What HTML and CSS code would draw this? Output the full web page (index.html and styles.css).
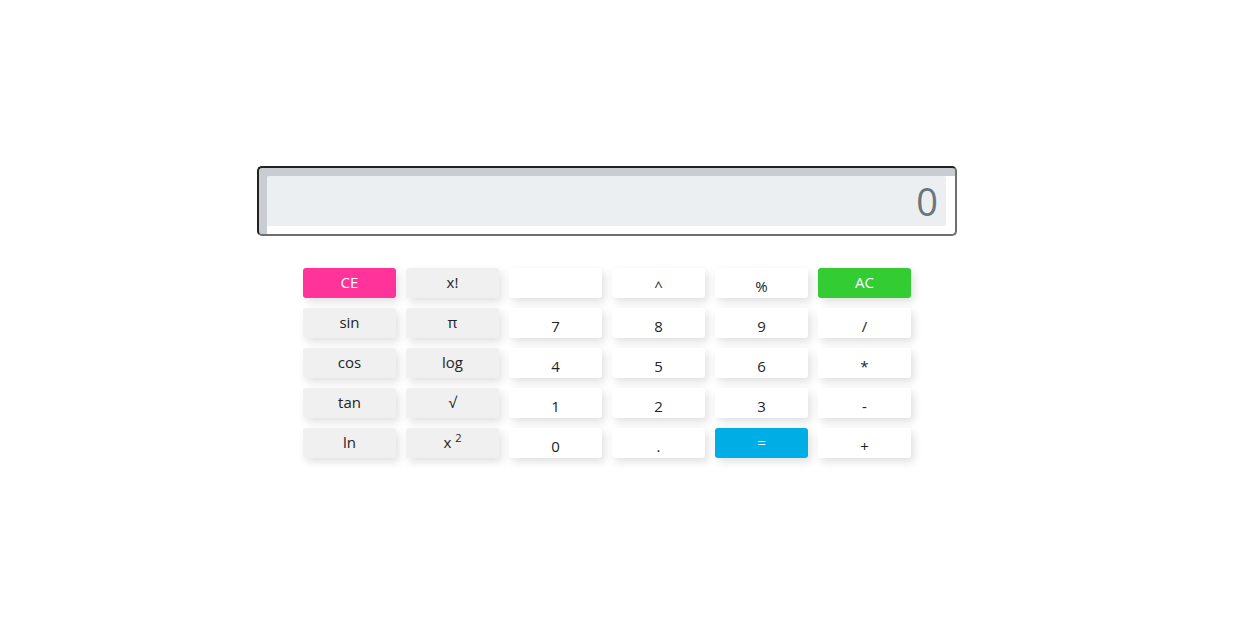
FILE: index.html
```html
<!DOCTYPE html>
<html lang="en">
<head>
<meta charset="utf-8">
<title>Calculator</title>
<link rel="stylesheet" href="styles.css">
</head>
<body>
<main class="calc">
  <div class="display">
    <div class="screen">0</div>
  </div>
  <div class="keys">
    <button class="key key-ce">CE</button>
    <button class="key key-fn">x!</button>
    <button class="key key-num"></button>
    <button class="key key-num">^</button>
    <button class="key key-num">%</button>
    <button class="key key-ac">AC</button>

    <button class="key key-fn">sin</button>
    <button class="key key-fn">π</button>
    <button class="key key-num">7</button>
    <button class="key key-num">8</button>
    <button class="key key-num">9</button>
    <button class="key key-num">/</button>

    <button class="key key-fn">cos</button>
    <button class="key key-fn">log</button>
    <button class="key key-num">4</button>
    <button class="key key-num">5</button>
    <button class="key key-num">6</button>
    <button class="key key-num">*</button>

    <button class="key key-fn">tan</button>
    <button class="key key-fn">√</button>
    <button class="key key-num">1</button>
    <button class="key key-num">2</button>
    <button class="key key-num">3</button>
    <button class="key key-num">-</button>

    <button class="key key-fn">ln</button>
    <button class="key key-fn">x <sup>2</sup></button>
    <button class="key key-num">0</button>
    <button class="key key-num">.</button>
    <button class="key key-eq">=</button>
    <button class="key key-num">+</button>
  </div>
</main>
</body>
</html>
```
FILE: styles.css
```css
html, body {
  margin: 0;
  padding: 0;
  background: #ffffff;
}

body {
  font-family: "Open Sans", "Noto Sans", sans-serif;
  color: #212529;
}

.calc {
  width: 700px;
  margin: 166px 0 0 257px;
  padding-bottom: 40px;
}

.display {
  box-sizing: border-box;
  height: 70px;
  border: 2px solid;
  border-color: #222222 #6e6e6e #6e6e6e #222222;
  border-radius: 5px;
  background: #ffffff;
  box-shadow: inset 8px 8px 0 #c9ccd0;
  padding: 8px 9px 8px 8px;
}

.screen {
  height: 50px;
  background: #eceff1;
  border-radius: 2px;
  text-align: right;
  font-size: 38px;
  line-height: 50px;
  color: #6c757d;
  padding-right: 8px;
  font-weight: 400;
}

.keys {
  margin: 32px auto 0;
  width: 608px;
  display: grid;
  grid-template-columns: repeat(6, 93px);
  grid-auto-rows: 30px;
  column-gap: 10px;
  row-gap: 10px;
}

.key {
  border: none;
  border-radius: 3px;
  font-family: "Open Sans", "Noto Sans", sans-serif;
  font-size: 15px;
  line-height: 20px;
  padding: 0;
  color: #212529;
  box-shadow: 3px 4px 8px rgba(0, 0, 0, 0.12);
}

.key sup {
  font-size: 11px;
  vertical-align: 6px;
  line-height: 0;
}

.key-fn {
  background: #f0f0f0;
  padding-bottom: 2px;
}

.key-num {
  background: #ffffff;
  padding-top: 5px;
}

.key-ce {
  background: #ff3399;
  color: #ffffff;
  padding-bottom: 2px;
}

.key-ac {
  background: #33cc33;
  color: #ffffff;
  padding-bottom: 2px;
}

.key-eq {
  background: #00aee6;
  color: #ffffff;
  padding-bottom: 2px;
}
```
